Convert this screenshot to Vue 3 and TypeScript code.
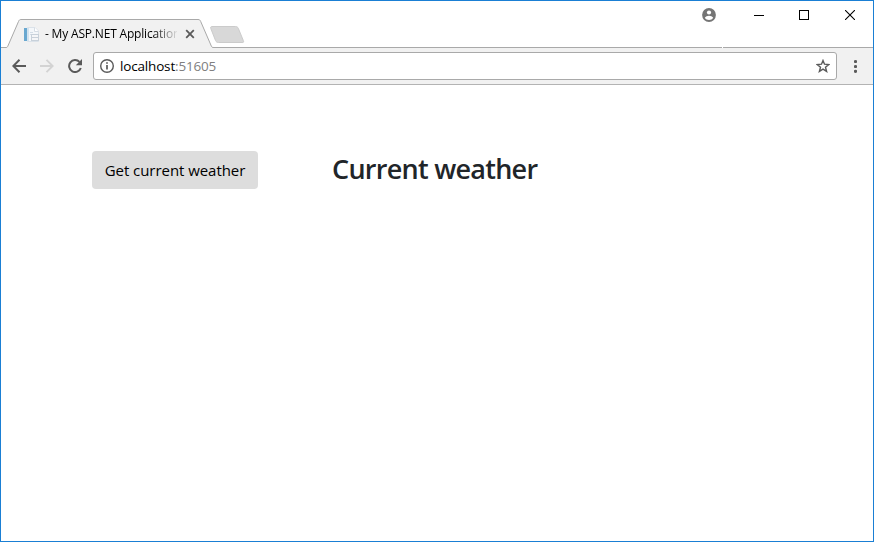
<script setup lang="ts">
import { ref } from 'vue'

const tabTitle = ref<string>('- My ASP.NET Application')
const host = ref<string>('localhost')
const port = ref<string>(':51605')
</script>

<template>
  <div class="window">
    <header class="titlebar">
      <div class="tab">
        <svg class="tab-shape" width="208" height="29" viewBox="0 0 208 29">
          <path d="M0 29V28.500C1 28.500 1.400 28 1.900 27L12.500 2.500C13.100 1 13.700 .5 15 .5H192C193.500 .5 194.100 1 194.700 2.500L205.300 27C205.800 28.200 206.300 28.500 208 28.500V29Z" fill="#f1f1f1" />
          <path d="M0 28.500C1 28.500 1.400 28 1.900 27L12.500 2.500C13.100 1 13.700 .5 15 .5H192C193.500 .5 194.100 1 194.700 2.500L205.300 27C205.800 28.200 206.300 28.500 208 28.500" fill="none" stroke="#a9a9a9" />
        </svg>
        <svg class="favicon" width="16" height="16" viewBox="0 0 16 16">
          <path d="M3.500 .5H11L14.500 4V14.500H3.500Z" fill="#f4f7fa" stroke="#dbe2e9" />
          <rect x="0" y="1" width="3" height="13" fill="#69a8d0" />
          <rect x="3" y="1" width="2" height="13" fill="#d3e3ef" />
          <path d="M10.500 .5V4.500H14.500" fill="#fff" stroke="#d5dce4" />
          <path d="M6 5.500H9M6 7.500H8" stroke="#d3dde7" />
          <rect x="7.500" y="7.500" width="7" height="6" fill="#f5f6f8" stroke="#c8d1da" />
          <path d="M8 10.500H14" stroke="#c8d0d9" />
        </svg>
        <span class="tab-title">{{ tabTitle }}</span>
        <svg class="tab-close" width="10" height="10" viewBox="0 0 10 10">
          <path d="M1.200 1.200L8.800 8.800M8.800 1.200L1.200 8.800" stroke="#5a5a5a" stroke-width="1.800" />
        </svg>
      </div>
      <svg class="new-tab" width="36" height="18" viewBox="0 0 36 18">
        <path d="M3 .5H26.500C28 .5 28.700 1 29.300 2.300L34.300 14.500C35 16.300 34.500 16.500 33 16.500H9.500C8 16.500 7.200 16 6.500 14.500L1.800 2.500C1.300 1.200 1.800.5 3 .5Z" fill="#d8d8d8" stroke="#cbcbcb" />
      </svg>
      <div class="controls">
        <svg width="14" height="14" viewBox="0 0 14 14">
          <circle cx="7" cy="7" r="6.900" fill="#757575" />
          <circle cx="7" cy="4.500" r="2.100" fill="#fff" />
          <path d="M2.800 9.800C3.400 8.500 5.500 7.800 7 7.800S10.600 8.500 11.200 9.800C10.300 11.200 8.800 12 7 12S3.700 11.200 2.800 9.800Z" fill="#fff" />
        </svg>
        <svg class="minimize" width="10" height="10" viewBox="0 0 10 10">
          <rect y="5" width="10" height="1" />
        </svg>
        <svg class="maximize" width="10" height="10" viewBox="0 0 10 10">
          <rect x=".5" y=".5" width="9" height="9" fill="none" stroke="#000" />
        </svg>
        <svg class="close" width="10" height="10" viewBox="0 0 10 10">
          <path d="M0 0L10 10M10 0L0 10" stroke="#000" stroke-width="1.100" />
        </svg>
      </div>
    </header>
    <nav class="toolbar">
      <svg class="back" width="14" height="14" viewBox="0 0 14 14">
        <path d="M14 7H1.500M7.500 .8L1.300 7L7.500 13.200" fill="none" stroke="#5a5a5a" stroke-width="2" />
      </svg>
      <svg class="forward" width="14" height="14" viewBox="0 0 14 14">
        <path d="M0 7H12.500M6.500 .8L12.700 7L6.500 13.200" fill="none" stroke="#d3d3d3" stroke-width="1.900" />
      </svg>
      <svg class="reload" width="15" height="14" viewBox="0 0 15 14">
        <path d="M12.800 9A6 6 0 1 1 11.500 2.900" fill="none" stroke="#5a5a5a" stroke-width="2" />
        <path d="M14 0V6.200H7.800Z" fill="#5a5a5a" />
      </svg>
      <div class="omnibox">
        <svg class="info" width="14" height="14" viewBox="0 0 14 14">
          <circle cx="7" cy="7" r="6.300" fill="none" stroke="#5a5a5a" stroke-width="1.400" />
          <path d="M7 3.200V4.800M7 6V10.600" stroke="#5a5a5a" stroke-width="1.700" />
        </svg>
        <span class="url">{{ host }}<span class="port">{{ port }}</span></span>
        <svg class="star" width="14" height="14" viewBox="0 0 14 14">
          <path d="M7 1.500L8.500 5.200L12.800 5.500L9.500 8.200L10.600 12.400L7 10.100L3.400 12.400L4.500 8.200L1.200 5.500L5.500 5.200Z" fill="none" stroke="#5a5a5a" stroke-width="1.400" />
        </svg>
      </div>
      <svg class="menu" width="3" height="14" viewBox="0 0 3 14">
        <circle cx="1.500" cy="2.500" r="1.600" /><circle cx="1.500" cy="7.500" r="1.600" /><circle cx="1.500" cy="12.300" r="1.600" />
      </svg>
    </nav>
    <main class="page">
      <button class="weather-button" type="button">Get current weather</button>
      <h2 class="heading">Current weather</h2>
    </main>
  </div>
</template>

<style>
body { margin: 0; }
</style>

<style scoped>
.window {
  box-sizing: border-box;
  width: 874px;
  height: 542px;
  border: 1px solid #1a7fd4;
  background: #fff;
  font-family: "Open Sans", "Noto Sans", sans-serif;
  display: flex;
  flex-direction: column;
  overflow: hidden;
}
svg { display: block; flex: none; }
.titlebar {
  height: 47px;
  flex: none;
  box-sizing: border-box;
  display: flex;
  align-items: flex-start;
  background: linear-gradient(#a9a9a9, #a9a9a9) 0 100% / 721px 1px no-repeat,
    linear-gradient(#a9a9a9, #a9a9a9) 100% 100% / 150px 1px no-repeat;
}
.tab {
  position: relative;
  box-sizing: border-box;
  width: 208px;
  height: 29px;
  margin: 18px 0 0 5px;
  padding: 0 0 0 18px;
  display: flex;
  align-items: center;
}
.tab-shape { position: absolute; left: 0; top: 0; }
.favicon { position: relative; margin-top: 2px; }
.tab-title {
  position: relative;
  width: 132px;
  margin-left: 5px;
  font-size: 12px;
  line-height: 16px;
  letter-spacing: -0.18px;
  white-space: nowrap;
  overflow: hidden;
  color: #000;
  -webkit-mask-image: linear-gradient(90deg, #000 108px, transparent 134px);
  mask-image: linear-gradient(90deg, #000 108px, transparent 134px);
}
.tab-close { position: relative; margin: 1px 0 0 8px; }
.new-tab { margin: 25px 0 0 -5px; }
.controls {
  margin: 7px 18px 0 auto;
  display: flex;
  align-items: center;
}
.minimize { margin-left: 38px; }
.maximize { margin-left: 35px; }
.close { margin-left: 36px; }
.toolbar {
  height: 37px;
  flex: none;
  box-sizing: border-box;
  border-bottom: 1px solid #b3b3b3;
  background: #f1f1f1;
  display: flex;
  align-items: center;
}
.back { margin-left: 11px; }
.forward { margin-left: 14px; }
.reload { margin-left: 14px; }
.omnibox {
  box-sizing: border-box;
  width: 744px;
  height: 28px;
  margin-left: 10px;
  padding: 0 6px;
  border: 1px solid #a9a9a9;
  border-radius: 3px;
  background: #fff;
  display: flex;
  align-items: center;
}
.url {
  margin-left: 6px;
  font-size: 13.5px;
  line-height: 18px;
  letter-spacing: -0.17px;
  color: #000;
}
.port { color: #808080; }
.star { margin-left: auto; }
.menu { margin-left: 17px; fill: #5a5a5a; }
.page {
  flex: 1;
  display: flex;
  align-items: flex-start;
  padding: 66px 91px 0;
}
.weather-button {
  box-sizing: border-box;
  width: 166px;
  height: 38px;
  padding: 0;
  border: 0;
  border-radius: 4px;
  background: #ddd;
  color: #000;
  font-family: inherit;
  font-size: 15px;
  line-height: 24px;
  letter-spacing: -0.05px;
  white-space: nowrap;
}
.heading {
  margin: 1px 0 0 74px;
  font-size: 27px;
  font-weight: 550;
  line-height: 34px;
  letter-spacing: -0.73px;
  color: #212529;
  white-space: nowrap;
}
</style>
